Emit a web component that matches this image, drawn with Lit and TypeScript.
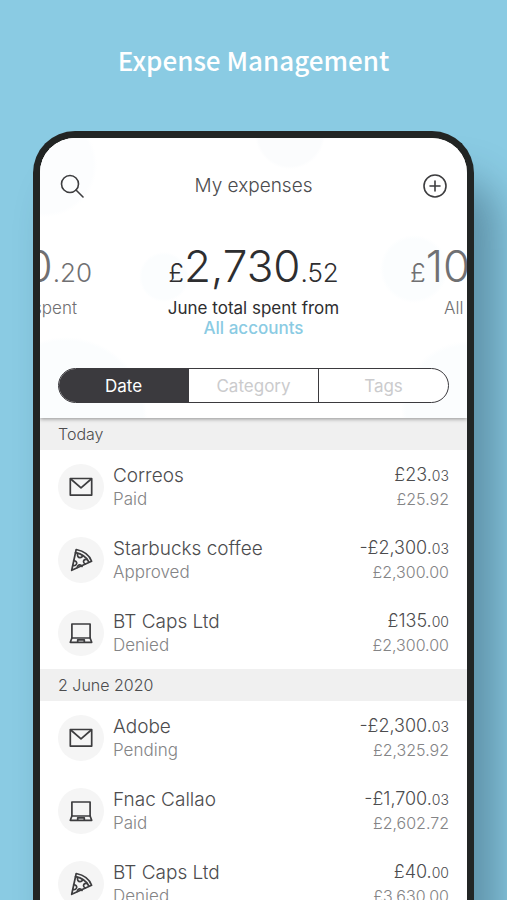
import { LitElement, html, css, svg } from "lit";
import { customElement, property, state } from "lit/decorators.js";

type IconName = "mail" | "pizza" | "laptop";

interface Expense {
  icon: IconName;
  name: string;
  status: string;
  whole: string;
  cents: string;
  total: string;
}

interface Group {
  title: string;
  items: Expense[];
}

const GROUPS: Group[] = [
  {
    title: "Today",
    items: [
      { icon: "mail", name: "Correos", status: "Paid", whole: "£23.", cents: "03", total: "£25.92" },
      { icon: "pizza", name: "Starbucks coffee", status: "Approved", whole: "-£2,300.", cents: "03", total: "£2,300.00" },
      { icon: "laptop", name: "BT Caps Ltd", status: "Denied", whole: "£135.", cents: "00", total: "£2,300.00" },
    ],
  },
  {
    title: "2 June 2020",
    items: [
      { icon: "mail", name: "Adobe", status: "Pending", whole: "-£2,300.", cents: "03", total: "£2,325.92" },
      { icon: "laptop", name: "Fnac Callao", status: "Paid", whole: "-£1,700.", cents: "03", total: "£2,602.72" },
      { icon: "pizza", name: "BT Caps Ltd", status: "Denied", whole: "£40.", cents: "00", total: "£3,630.00" },
    ],
  },
];

const ICONS = {
  mail: svg`<path d="M1.300 3.500h21.400v16.600H1.300z"/><path d="M1.800 4l10.200 8.800L22.200 4"/>`,
  pizza: svg`
    <path d="M7.200 1.500C14.500 3 20.500 7.300 22.600 13.200L2.700 22.300z"/>
    <path d="M6.500 4.700c6 1.200 11 4.600 13.400 9.300"/>
    <path d="M8.600 5.400c-.6 2.600.6 4.300 2.400 4.300 1.300 0 2.300-.8 2.500-2"/>
    <path d="M18.300 11.500c-1.900-.6-3.600.3-3.800 1.800-.1 1.100.6 2.200 1.700 2.700"/>
    <path d="M4.700 12.600c2.200.2 3.200 1.400 3 2.900-.2 1.400-1.800 2.400-3.700 1.900"/>
    <path d="M8.300 19.500c.1-1.700 1.200-2.700 2.600-2.600 1.100.1 1.800.7 2.100 1.600"/>`,
  laptop: svg`
    <path d="M2.900 3h18.200v14H2.900z"/>
    <path d="M2.900 17L1.300 21.300h21.400L21.100 17"/>
    <path d="M8.700 21v-2.200h6.600V21"/>`,
};

@customElement("expense-row")
class ExpenseRow extends LitElement {
  @property({ attribute: false }) item!: Expense;

  static styles = css`
    :host {
      display: flex;
      align-items: center;
      gap: 9px;
      height: 73px;
      padding: 0 18px;
    }
    .badge {
      flex: none;
      display: grid;
      place-items: center;
      width: 46px;
      height: 46px;
      border-radius: 50%;
      background: #f5f5f5;
    }
    .icon {
      width: 24px;
      height: 24px;
      fill: none;
      stroke: #3d3d3f;
      stroke-width: 1.7;
      stroke-linejoin: round;
      stroke-linecap: round;
    }
    .text {
      flex: 1;
      min-width: 0;
    }
    .sums {
      text-align: right;
    }
    .main {
      line-height: 24px;
      color: #4c4c4e;
      white-space: nowrap;
    }
    .sub {
      line-height: 22px;
      color: #848486;
      white-space: nowrap;
    }
    .text .main {
      font-size: 19px;
    }
    .text .sub {
      font-size: 17px;
    }
    .sums .main {
      font-size: 18px;
    }
    .sums .sub {
      font-size: 16px;
    }
    .cents {
      font-size: 14px;
    }
  `;

  render() {
    const { icon, name, status, whole, cents, total } = this.item;
    return html`
      <span class="badge"><svg class="icon" viewBox="0 0 24 24" aria-hidden="true">${ICONS[icon]}</svg></span>
      <div class="text">
        <div class="main">${name}</div>
        <div class="sub">${status}</div>
      </div>
      <div class="sums">
        <div class="main">${whole}<span class="cents">${cents}</span></div>
        <div class="sub">${total}</div>
      </div>
    `;
  }
}

@customElement("app-root")
class AppRoot extends LitElement {
  @state() private tab = "Date";

  static styles = css`
    :host {
      display: flex;
      flex-direction: column;
      height: 100vh;
      overflow: hidden;
      background: #8acbe3;
      font-family: Inter, "Liberation Sans", sans-serif;
      font-weight: 350;
      color: #4c4c4e;
    }
    .headline {
      flex: none;
      margin: 0;
      padding: 40px 0 51px;
      text-align: center;
      font-family: "Noto Sans CJK SC", sans-serif;
      font-size: 26px;
      line-height: 40px;
      font-weight: 500;
      color: #fff;
    }
    .phone {
      flex: none;
      margin: 0 33px;
      border: 7px solid #222524;
      border-bottom: 0;
      border-radius: 42px 42px 0 0;
      background: #fff;
      overflow: hidden;
      box-shadow: 24px 48px 40px rgba(30, 60, 80, 0.4);
    }
    .top {
      position: relative;
      box-shadow: 0 1px 4px rgba(0, 0, 0, 0.4);
      background:
        radial-gradient(circle at 5px 27px, #fcfdfe 48px, transparent 52px),
        radial-gradient(circle at 250px -4px, #fbfcfd 32px, transparent 35px),
        radial-gradient(circle at 124px 139px, #fbfdfe 22px, transparent 25px),
        radial-gradient(circle at 374px 131px, #fbfdfe 30px, transparent 34px),
        radial-gradient(circle at 26px 280px, #fbfdfe 77px, transparent 81px),
        radial-gradient(circle at 428px 270px, #fbfdfe 62px, transparent 67px),
        #fff;
    }
    .bar {
      display: flex;
      align-items: center;
      justify-content: space-between;
      padding: 32px 20px 0;
    }
    .title {
      margin: 0;
      font-size: 19px;
      line-height: 32px;
      font-weight: 350;
    }
    .tool {
      display: grid;
      place-items: center;
      width: 24px;
      height: 32px;
      padding: 0;
      border: 0;
      background: none;
    }
    .glyph {
      width: 24px;
      height: 24px;
      fill: none;
      stroke: #3d3d3f;
      stroke-width: 1.6;
      stroke-linecap: round;
    }
    .totals {
      display: flex;
      justify-content: space-between;
      padding: 39px 0 30px;
    }
    .side {
      flex: none;
      box-sizing: border-box;
      display: flex;
      flex-direction: column;
      width: 57px;
      overflow: hidden;
      color: #707072;
    }
    .prev {
      align-items: flex-end;
      padding-right: 5px;
    }
    .centre {
      text-align: center;
    }
    .amount {
      font-size: 44px;
      line-height: 50px;
      font-weight: 300;
      white-space: nowrap;
    }
    .centre .amount {
      color: #2e2e30;
    }
    .small {
      font-size: 26px;
    }
    .label {
      font-size: 17px;
      line-height: 20px;
      white-space: nowrap;
    }
    .prev .label {
      padding-right: 15px;
    }
    .next .label {
      padding-left: 34px;
    }
    .centre .label {
      font-weight: 400;
      color: #2e2e30;
    }
    .accounts {
      display: block;
      font-size: 17px;
      line-height: 20px;
      font-weight: 500;
      color: #8acbe3;
      text-decoration: none;
    }
    .tabs {
      display: flex;
      height: 35px;
      box-sizing: border-box;
      margin: 0 18px;
      border: 1px solid #3b3a3e;
      border-radius: 18px;
      overflow: hidden;
      background: #fff;
    }
    .tab {
      flex: 1;
      padding: 0;
      border: 0;
      border-left: 1px solid #3b3a3e;
      background: none;
      font: inherit;
      font-size: 17px;
      font-weight: 400;
      color: #cbcbcd;
    }
    .tab:first-child {
      border-left: 0;
    }
    .on {
      background: #3b3a3e;
      color: #fff;
    }
    .foot {
      height: 15px;
    }
    .day {
      margin: 0;
      padding: 0 18px;
      font-size: 16px;
      line-height: 32px;
      font-weight: 350;
      background: #f0f0f0;
    }
    .list {
      margin: 0;
      padding: 0;
      list-style: none;
    }
  `;

  render() {
    return html`
      <h1 class="headline">Expense Management</h1>
      <main class="phone">
        <header class="top">
          <div class="bar">
            <button class="tool" aria-label="Search">
              <svg class="glyph" viewBox="0 0 24 24"><circle cx="10" cy="10" r="8.500"/><path d="M16 16l7 7"/></svg>
            </button>
            <h2 class="title">My expenses</h2>
            <button class="tool" aria-label="Add expense">
              <svg class="glyph" viewBox="0 0 24 24"><circle cx="12" cy="12" r="11"/><path d="M12 7v10M7 12h10"/></svg>
            </button>
          </div>
          <div class="totals">
            <div class="side prev">
              <div class="amount">0<span class="small">.20</span></div>
              <div class="label">spent</div>
            </div>
            <div class="centre">
              <div class="amount"><span class="small">£</span>2,730<span class="small">.52</span></div>
              <div class="label">June total spent from</div>
              <a class="accounts" href="#accounts">All accounts</a>
            </div>
            <div class="side next">
              <div class="amount"><span class="small">£</span>10</div>
              <div class="label">All</div>
            </div>
          </div>
          <div class="tabs">
            ${["Date", "Category", "Tags"].map(
              (name) => html`<button
                class="tab ${this.tab === name ? "on" : ""}"
                aria-pressed=${this.tab === name}
                @click=${() => (this.tab = name)}
              >${name}</button>`
            )}
          </div>
          <div class="foot"></div>
        </header>
        ${GROUPS.map(
          (group) => html`
            <h3 class="day">${group.title}</h3>
            <ul class="list">
              ${group.items.map((item) => html`<li><expense-row .item=${item}></expense-row></li>`)}
            </ul>
          `
        )}
      </main>
    `;
  }
}
